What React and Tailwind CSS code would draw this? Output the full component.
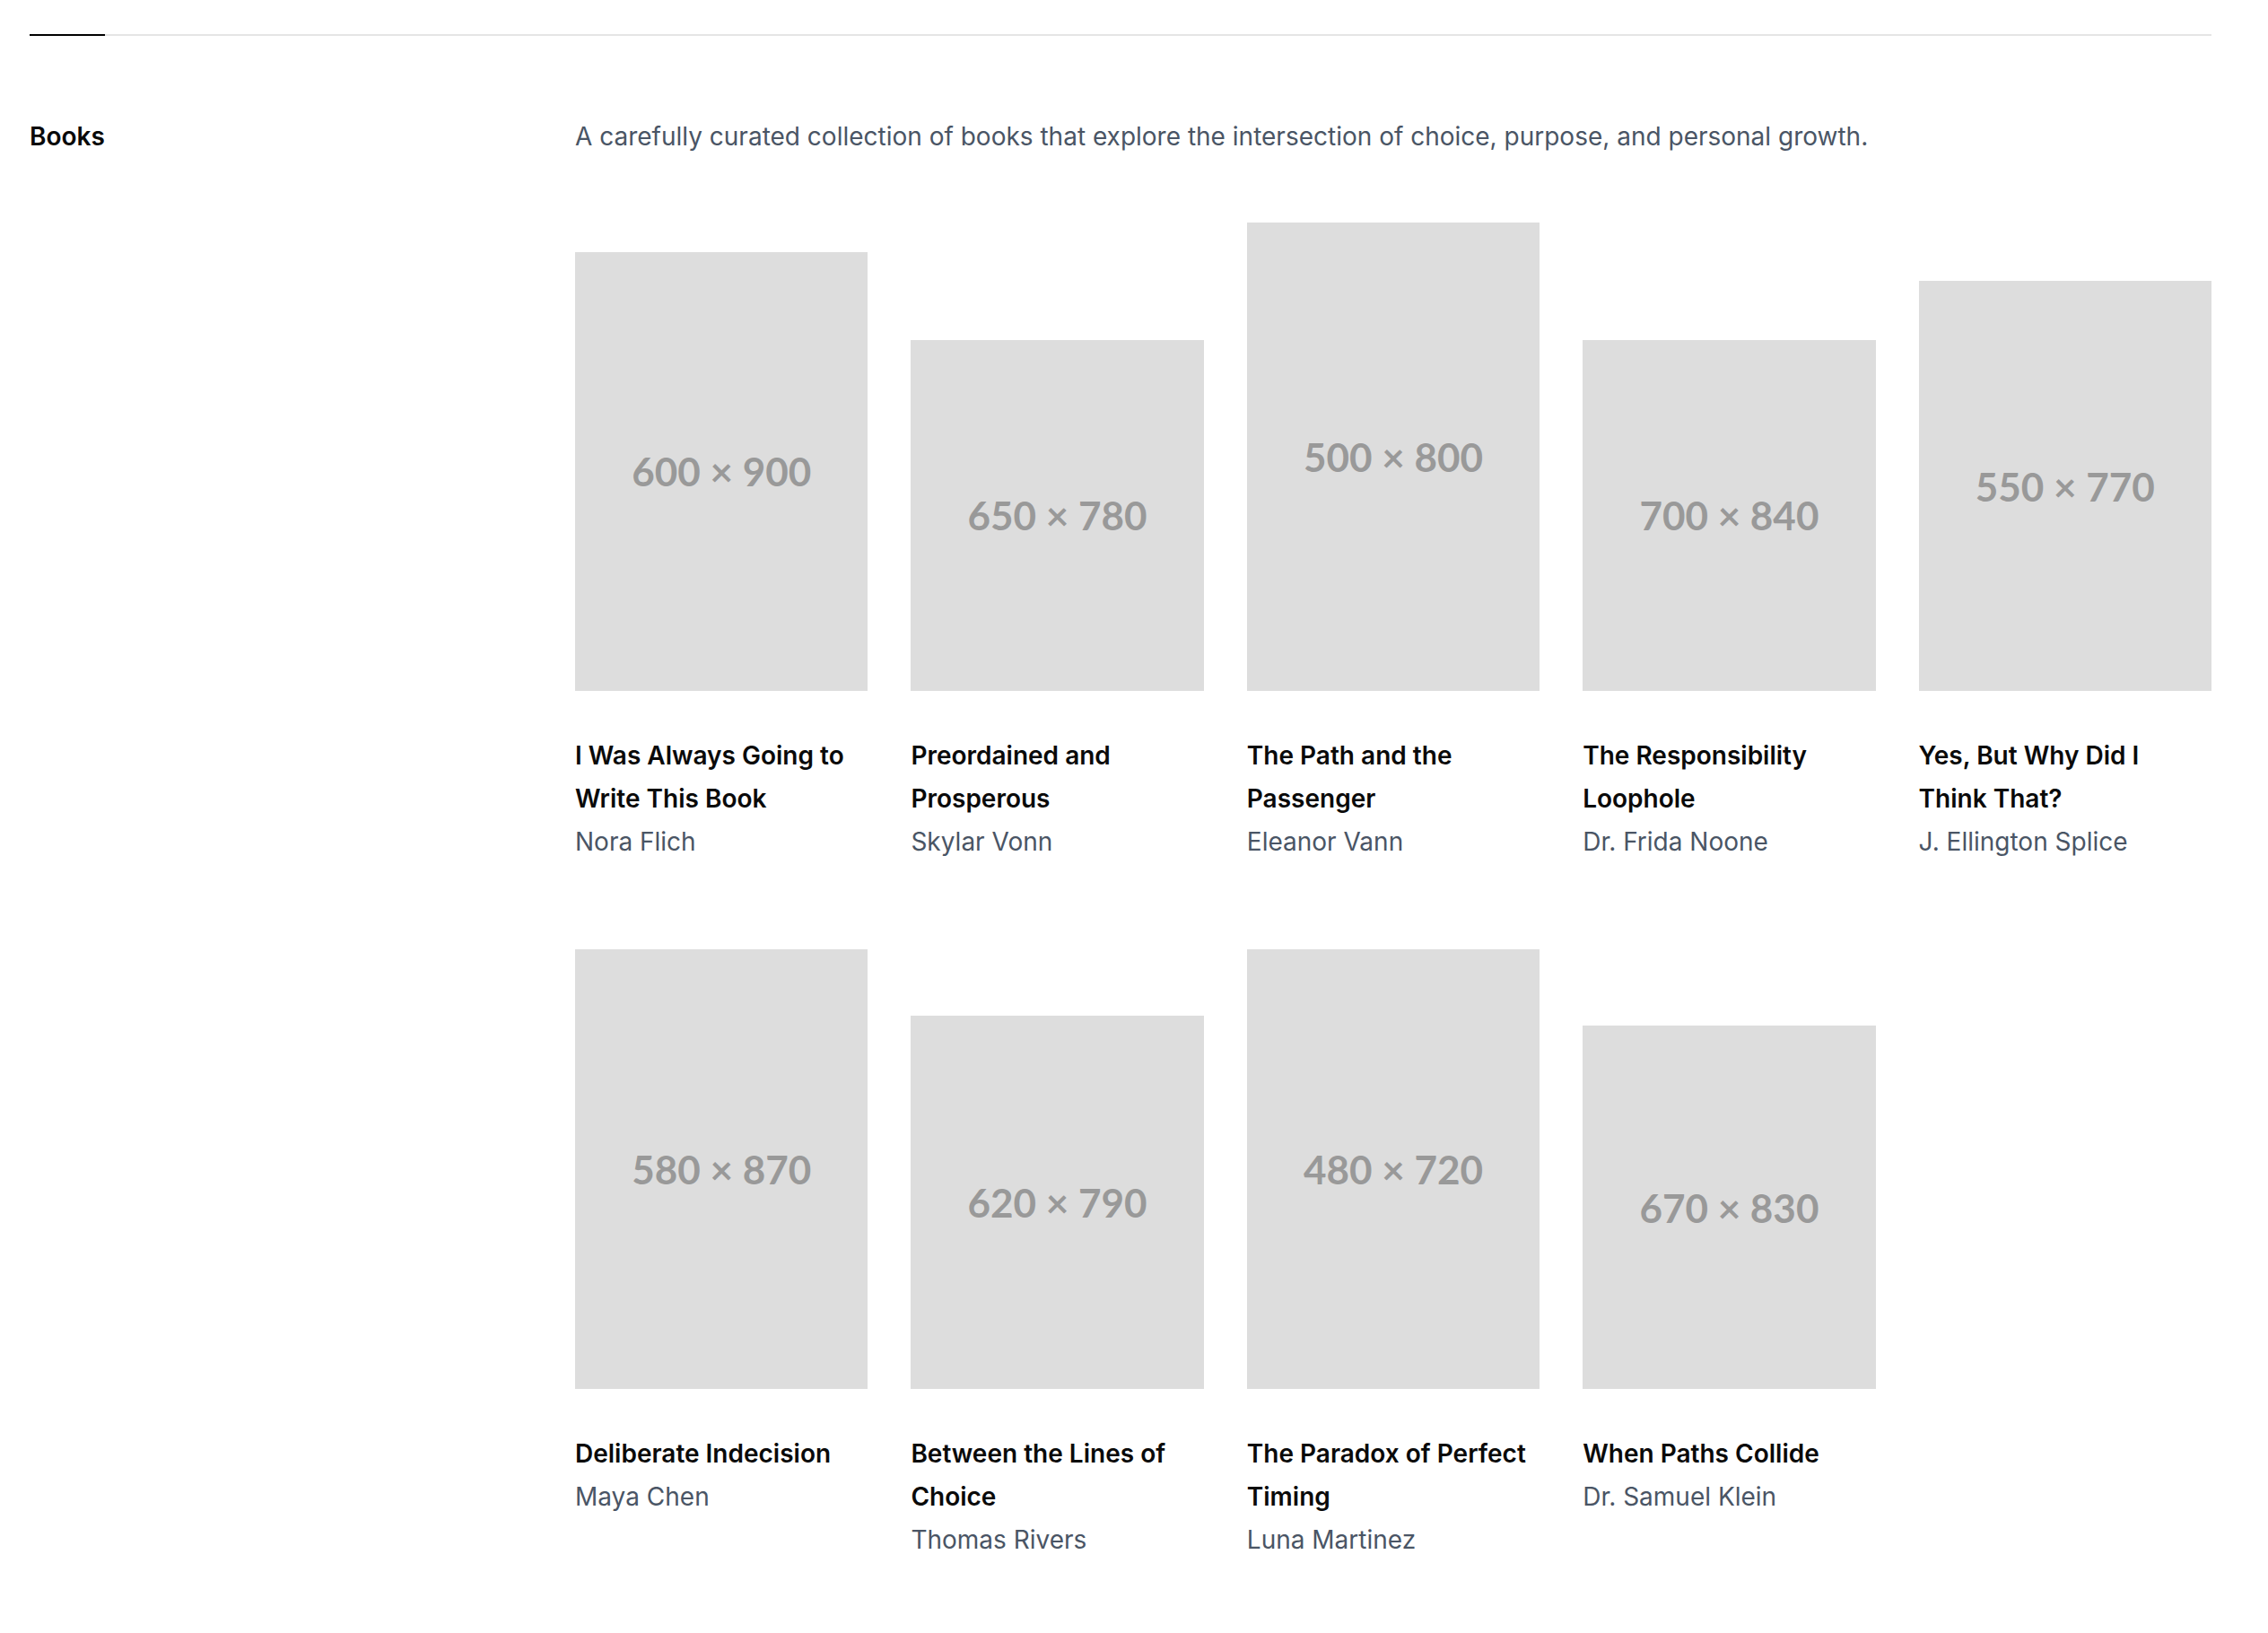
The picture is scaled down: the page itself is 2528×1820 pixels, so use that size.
const books = [
  { w: 600, h: 900, title: "I Was Always Going to Write This Book", author: "Nora Flich" },
  { w: 650, h: 780, title: "Preordained and Prosperous", author: "Skylar Vonn" },
  { w: 500, h: 800, title: "The Path and the Passenger", author: "Eleanor Vann" },
  { w: 700, h: 840, title: "The Responsibility Loophole", author: "Dr. Frida Noone" },
  { w: 550, h: 770, title: "Yes, But Why Did I Think That?", author: "J. Ellington Splice" },
  { w: 580, h: 870, title: "Deliberate Indecision", author: "Maya Chen" },
  { w: 620, h: 790, title: "Between the Lines of Choice", author: "Thomas Rivers" },
  { w: 480, h: 720, title: "The Paradox of Perfect Timing", author: "Luna Martinez" },
  { w: 670, h: 830, title: "When Paths Collide", author: "Dr. Samuel Klein" },
];

function Placeholder({ w, h }) {
  return (
    <div
      className="flex w-full items-center justify-center bg-[#dddddd]"
      style={{ aspectRatio: `${w} / ${h}` }}
    >
      <span className="font-['Lato'] text-[44px] font-bold leading-none text-[#999999]">
        {w} × {h}
      </span>
    </div>
  );
}

export default function App() {
  const rows = [books.slice(0, 5), books.slice(5, 10)];
  return (
    <div className="min-h-screen bg-white pb-20 pl-[33px] pr-[63px] pt-[38px] font-['Inter',sans-serif]">
      <div className="h-[2px] w-full bg-[#e5e5e5]">
        <div className="h-[2px] w-[84px] bg-black" />
      </div>
      <div className="mt-[90px] flex">
        <div className="w-[608px] shrink-0">
          <h2 className="text-[28px] font-semibold leading-[44px] text-[#0a0a0a]">Books</h2>
        </div>
        <div className="min-w-0 flex-1">
          <p className="text-[28px] leading-[44px] text-gray-600">
            A carefully curated collection of books that explore the intersection of choice, purpose, and personal growth.
          </p>
          <div className="mt-[74px] flex flex-col gap-24">
            {rows.map((row, ri) => (
              <div key={ri} className="flex flex-col gap-12">
                <div className="grid grid-cols-5 items-end gap-x-12">
                  {row.map((b) => (
                    <Placeholder key={b.title} w={b.w} h={b.h} />
                  ))}
                </div>
                <div className="grid grid-cols-5 items-start gap-x-12">
                  {row.map((b) => (
                    <div key={b.title} className="leading-[48px]">
                      <h3 className="text-[28px] font-semibold leading-[48px] text-[#0a0a0a]">{b.title}</h3>
                      <p className="text-[28px] leading-[48px] text-gray-600">{b.author}</p>
                    </div>
                  ))}
                </div>
              </div>
            ))}
          </div>
        </div>
      </div>
    </div>
  );
}
